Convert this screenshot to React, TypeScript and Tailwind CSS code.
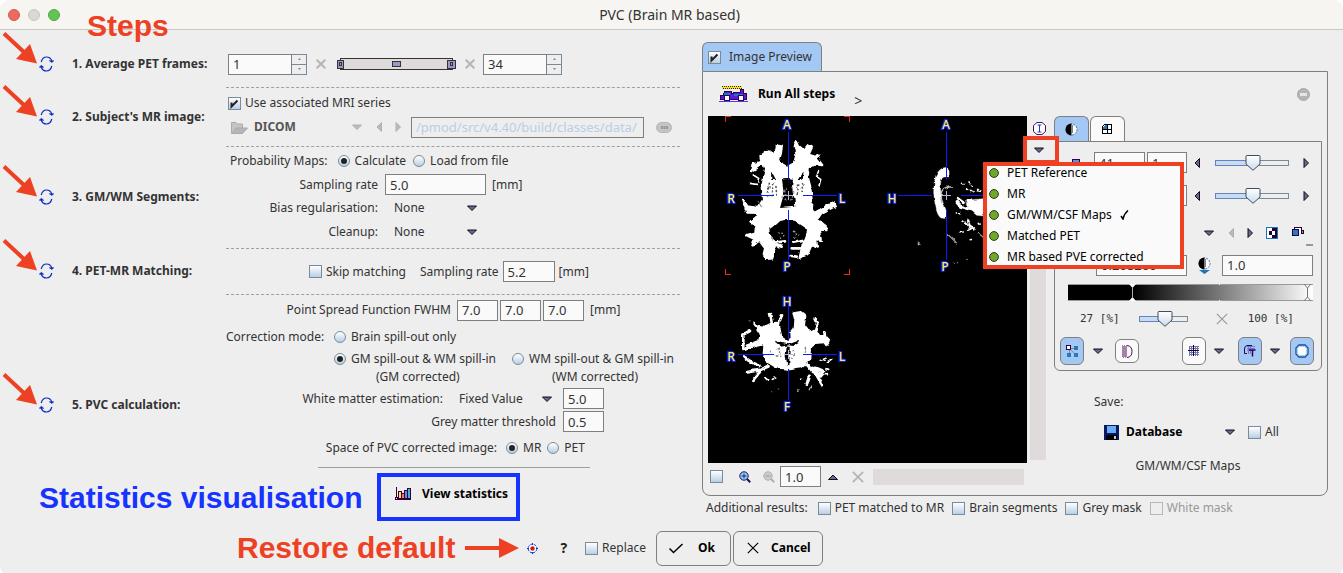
import React, { useState } from 'react';
import clsx from 'clsx';

const inputClass =
  'h-[21px] border border-[#7f7f7f] bg-[#fafafa] px-1 text-[13px] leading-4 text-[#333] outline-none';

function Triangle({ dir = 'down', muted = false }: { dir?: 'down' | 'up' | 'left' | 'right'; muted?: boolean }) {
  const shapes = {
    down: 'M0.5 1 H9.5 L5 5.5 Z',
    up: 'M0.5 5.5 H9.5 L5 1 Z',
    left: 'M5.5 0.5 V9.5 L1 5 Z',
    right: 'M1 0.5 V9.5 L5.5 5 Z',
  };
  const flat = dir === 'down' || dir === 'up';
  return (
    <svg
      width={flat ? 10 : 7}
      height={flat ? 6 : 10}
      className="shrink-0"
      fill={muted ? '#bababa' : '#666699'}
      stroke={muted ? '#b0b0b0' : '#111'}
    >
      <path d={shapes[dir]} />
    </svg>
  );
}

function Check({ label, checked = false, muted = false }: { label: string; checked?: boolean; muted?: boolean }) {
  const [on, setOn] = useState(checked);
  return (
    <label className={clsx('flex items-center gap-1 whitespace-nowrap', muted && 'text-[#999]')}>
      <span className="relative h-[13px] w-[13px] shrink-0">
        <input
          type="checkbox"
          checked={on}
          disabled={muted}
          onChange={() => setOn(!on)}
          className={clsx(
            'block h-[13px] w-[13px] appearance-none border',
            muted ? 'border-[#b8b8b8] bg-[#eee]' : 'border-[#7a8a99] bg-linear-to-b from-white to-[#b8cfe5]'
          )}
        />
        {on && (
          <svg width="13" height="13" className="pointer-events-none absolute inset-0">
            <path d="M3.5 5.5 V9.5 L9.5 3.5" fill="none" stroke="#222" strokeWidth="2" />
          </svg>
        )}
      </span>
      {label}
    </label>
  );
}

function Radio({ name, label, checked = false }: { name: string; label: string; checked?: boolean }) {
  return (
    <label className="flex items-center gap-[5px] whitespace-nowrap">
      <span className="relative h-3 w-3 shrink-0">
        <input
          type="radio"
          name={name}
          defaultChecked={checked}
          className="peer block h-3 w-3 appearance-none rounded-full border border-[#7a8a99] bg-linear-to-b from-white to-[#b8cfe5]"
        />
        <span className="pointer-events-none absolute inset-[3px] hidden rounded-full bg-[#222] peer-checked:block" />
      </span>
      {label}
    </label>
  );
}

function Select({ label, value, className, muted = false }: { label: string; value: string; className: string; muted?: boolean }) {
  return (
    <span className={clsx('flex items-center', className)}>
      <select
        aria-label={label}
        disabled={muted}
        className="min-w-0 flex-1 appearance-none bg-transparent opacity-100 outline-none"
      >
        <option>{value}</option>
      </select>
      <Triangle muted={muted} />
    </span>
  );
}

function Spinner({ label, value }: { label: string; value: string }) {
  return (
    <span className="flex">
      <input aria-label={label} defaultValue={value} className={clsx(inputClass, 'w-16')} />
      <span className="flex w-[15px] flex-col">
        <button aria-label="Increase" className="flex h-[11px] items-center justify-center border border-l-0 border-[#7a8a99]">
          <svg width="3" height="2" fill="#7a8a99"><path d="M0 2 L1.5 0 L3 2 Z" /></svg>
        </button>
        <button aria-label="Decrease" className="flex h-[10px] items-center justify-center border border-t-0 border-l-0 border-[#7a8a99]">
          <svg width="3" height="2" fill="#7a8a99"><path d="M0 0 L1.5 2 L3 0 Z" /></svg>
        </button>
      </span>
    </span>
  );
}

function Cross({ size = 10, width = 2, color = '#b5b5b5' }: { size?: number; width?: number; color?: string }) {
  return (
    <svg width={size} height={size} viewBox="0 0 10 10" className="shrink-0">
      <path d="M0.7 0.7 L9.3 9.3 M9.3 0.7 L0.7 9.3" stroke={color} strokeWidth={width} />
    </svg>
  );
}

function Slider({ label, width, thumb }: { label: string; width: number; thumb: number }) {
  return (
    <span className="relative block h-4 shrink-0" style={{ width }}>
      <svg width={width} height="16" className="block">
        <defs>
          <linearGradient id="thumb" x1="0" y1="0" x2="0" y2="1">
            <stop offset="0" stopColor="#fff" />
            <stop offset="1" stopColor="#c8dcf0" />
          </linearGradient>
        </defs>
        <rect x="0.5" y="5.5" width={width - 1} height="5" fill="#eee" stroke="#7a8a99" />
        <rect x="0.5" y="5.5" width={thumb} height="5" fill="#c8dcf0" stroke="#6382bf" />
        <path
          d={`M${thumb - 7} 1.5 q0 -1 1 -1 h12 q1 0 1 1 V9 L${thumb} 15.3 L${thumb - 7} 9 Z`}
          fill="url(#thumb)"
          stroke="#444c58"
        />
      </svg>
      <input
        type="range"
        aria-label={label}
        defaultValue={(thumb / width) * 100}
        className="absolute inset-0 w-full opacity-0"
      />
    </span>
  );
}

function RefreshIcon() {
  return (
    <svg width="15" height="16" fill="none" stroke="#0a2bc4" strokeWidth="1.2">
      <path d="M2.2 6 Q3.5 1 7.5 1 Q11.5 1 12.8 5" />
      <path d="M2.2 11 Q3.5 15 7.5 15 Q11.5 15 12.8 10" />
      <path d="M10.3 4.7 H14.7 L13 6.6 Z M0.3 11.3 H4.7 L2.3 9.2 Z" fill="#0a2bc4" strokeWidth="0.6" />
    </svg>
  );
}

function FolderIcon() {
  return (
    <svg width="17" height="13" stroke="#aaa" fill="#c4c4c4">
      <path d="M0.5 12.5 V1.5 H5 L6.5 3 H11.5 V12.5 Z" />
      <path d="M1 12.5 L5 7 H16.5 L11.5 12.5 Z" fill="#b5b5b5" />
    </svg>
  );
}

function CarIcon() {
  return (
    <svg width="30" height="17" shapeRendering="crispEdges">
      <path d="M3 1.5 H23" stroke="#ffe800" strokeWidth="3" />
      <path d="M3 0.5 H22 M4 2.5 H23" stroke="#2c1a4d" strokeDasharray="1 1" />
      <path d="M4 7 H5 V5 H12 V7 H14 V6 H21 V3 H24 V7 H27 V13 H1 V9 H4 Z" fill="#5a1ae0" stroke="#2a0845" />
      <path d="M12 4 H15 V6 H21 V4 H12" fill="#eee" />
      <path d="M5 7.5 H11 M15 9 H24" stroke="#1976c8" strokeWidth="2" />
      <circle cx="8" cy="12" r="3" fill="#fff" stroke="#2a0845" />
      <circle cx="22" cy="12" r="3" fill="#fff" stroke="#2a0845" />
      <path d="M0 15.5 H29" stroke="#5530ff" />
    </svg>
  );
}

function ChartIcon() {
  return (
    <svg width="17" height="14" shapeRendering="crispEdges" stroke="#35003f">
      <path d="M1.5 0 V12.5 H16" fill="none" />
      <rect x="0.5" y="10.5" width="2" height="2" fill="#fff" />
      <rect x="3.5" y="4.5" width="3" height="7" fill="#ffe14a" />
      <rect x="6.5" y="6.5" width="3" height="5" fill="#ff7a4a" />
      <rect x="9.5" y="3.5" width="3" height="8" fill="#5b8fe8" />
      <rect x="12.5" y="1.5" width="3" height="10" fill="#40b4cf" />
    </svg>
  );
}

function ContrastIcon() {
  return (
    <svg width="13" height="13">
      <circle cx="6.5" cy="6.5" r="5.5" fill="#fff" stroke="#2f78b8" strokeDasharray="2 1" />
      <path d="M6.5 0.5 A6 6 0 0 0 6.5 12.5 Z" fill="#000" />
      <path d="M7.5 2.5 v8" stroke="#000" strokeDasharray="1 1" />
    </svg>
  );
}

function MagnifierIcon({ sign, muted = false }: { sign: 'plus' | 'minus'; muted?: boolean }) {
  return (
    <svg width="12" height="12" stroke={muted ? '#b0b0b0' : '#2a0a50'}>
      <circle cx="5" cy="5" r="4.2" fill={muted ? '#ccc' : '#8fd0f5'} />
      <path d="M8 8 L11.2 11.2" strokeWidth="2" />
      <path d={sign === 'plus' ? 'M2.5 5 H7.5 M5 2.5 V7.5' : 'M2.5 5 H7.5'} stroke={muted ? '#999' : '#0a2a90'} />
    </svg>
  );
}

function StepArrow() {
  return (
    <svg width="36" height="34" className="pointer-events-none absolute top-1/2 left-[2px] -mt-[34px]">
      <path d="M2 2.5 L24 23" stroke="#ee4023" strokeWidth="4" />
      <path d="M35 32.5 L14 28 L28 13 Z" fill="#ee4023" />
    </svg>
  );
}

function Step({ title, last = false, children }: { title: string; last?: boolean; children: React.ReactNode }) {
  return (
    <section className="relative grid grid-cols-[39px_33px_154px_1fr] items-center">
      <StepArrow />
      <button aria-label={`Run ${title}`} className="col-start-2 pb-0.5">
        <RefreshIcon />
      </button>
      <h2 className="pb-0.5 font-bold whitespace-nowrap">{title}</h2>
      <div className={clsx('flex flex-col justify-center self-stretch', !last && 'border-b border-dashed border-[#a0a0a0]')}>
        {children}
      </div>
    </section>
  );
}

function OrientationLabel({ x, y, children }: { x: number; y: number; children: string }) {
  return (
    <text x={x} y={y} textAnchor="middle" stroke="#0a22ff" strokeWidth="2" paintOrder="stroke" fill="#fff04a">
      {children}
    </text>
  );
}

function BrainViewer() {
  return (
    <svg width="319" height="347" className="block font-['Noto_Sans',sans-serif] text-xs font-medium">
      <defs>
        <filter id="tissue" x="-10%" y="-10%" width="120%" height="120%">
          <feTurbulence type="fractalNoise" baseFrequency="0.16" numOctaves="3" seed="4" />
          <feDisplacementMap in="SourceGraphic" scale="4" xChannelSelector="R" yChannelSelector="G" />
        </filter>
      </defs>
      {/* Axial slice */}
      <g filter="url(#tissue)">
        <g transform="translate(-8 -86) scale(0.33333)" fill="#fff" stroke="#fff" strokeLinecap="round" strokeLinejoin="round">
          <path
            d="M182 378 L205 364 L218 374 L228 362 L232 345 L245 347 L242 370 L236 390 L247 404 L262 412 L280 402 L286 390 L290 372 L285 350 L289 333 L297 350 L312 362 L324 346 L335 352 L325 374 L348 382 L366 405 L346 402 L326 412 L322 440 L330 470 L334 508 L332 535 L342 550 L378 530 L400 518 L404 528 L362 551 L351 569 L378 590 L382 600 L355 598 L362 632 L348 628 L350 652 L335 642 L322 672 L300 682 L307 650 L318 625 L326 602 L314 586 L289 570 L262 565 L239 569 L214 592 L206 580 L222 556 L208 560 L204 595 L208 625 L226 640 L222 655 L213 685 L200 686 L192 672 L196 655 L176 628 L158 646 L165 627 L140 615 L166 608 L170 588 L152 574 L169 563 L174 548 L142 547 L128 510 L142 530 L174 535 L190 510 L186 475 L196 430 L200 412 L186 402 L160 418 L158 404 L185 396 Z"
            strokeWidth="8"
          />
          <g fill="none" strokeWidth="8">
            <path d="M205 390 L195 367 M160 400 L154 423 M225 390 L252 424 M303 390 L276 425 M340 390 L354 374" />
            <path d="M205 640 L255 634 M245 650 L228 645 M325 630 L280 638 M300 655 L275 655 M290 680 L272 678" />
            <path d="M330 590 L337 640 M190 560 L186 620" strokeWidth="20" />
            <path d="M355 425 L350 440 L362 448 L357 468 M150 460 L172 463 M160 435 L176 445 L178 455" strokeWidth="5" />
          </g>
          <g fill="#000" stroke="none">
            <path d="M246 448 Q262 440 279 448 L276 475 Q284 500 286 530 L266 532 L240 534 L248 505 L250 478 Z" />
            <path d="M213 425 L221 436 L228 450 L214 450 Z M311 425 L301 436 L294 450 L308 450 Z" />
          </g>
          <g fill="none" stroke="#555" strokeWidth="5">
            <path d="M208 460 L202 505 M218 462 L216 500 M228 470 L230 495 M296 465 L290 500 M308 460 L306 490" strokeDasharray="2 10" />
            <path d="M172 510 L184 530" stroke="#777" strokeWidth="3" />
          </g>
          <g fill="none" stroke="#999" strokeWidth="4">
            <path d="M250 485 L258 475 M258 510 L250 515 M276 475 L282 488 M272 510 L278 500 M252 495 H280" strokeDasharray="3 7" />
            <path d="M235 606 L248 610 M280 604 L295 618 M240 622 L255 616 M285 622 L299 618" strokeDasharray="2 9" />
          </g>
        </g>
      </g>
      {/* Sagittal slice */}
      <g filter="url(#tissue)">
        <g transform="translate(-8 -86) scale(0.33333)" fill="#fff" stroke="#fff" strokeLinecap="round" strokeLinejoin="round">
          <path d="M744 413 Q719 408 708 438 Q693 480 710 543 Q717 567 732 565 Q744 560 739 542 Q718 500 722 453 Q726 438 744 441 Z" />
          <path d="M725 515 Q716 475 745 471 L757 471" fill="none" strokeWidth="4" stroke="#bbb" />
          <path d="M768 515 L781 529 L805 536 M772 505 L790 518" fill="none" strokeWidth="9" />
          <path d="M800 510 L850 506 V558 L830 556 L806 536 Z" />
          <path d="M788 460 L793 463 M807 459 L817 468 M803 478 L822 485 M833 481 L843 487 M769 549 L781 548 M786 573 L799 579 M806 603 L821 590 M779 605 L790 606 M811 629 L818 628 M835 580 L840 585 M826 515 L850 530" strokeWidth="5" strokeDasharray="3 7" />
          <path d="M795 578 L815 590 L828 603 M805 568 L812 600" fill="none" strokeWidth="6" strokeDasharray="8 6" />
          <path d="M742 612 L771 640 M652 637 L658 643 M835 610 L850 622" strokeWidth="4" stroke="#999" />
          <path d="M762 697 H763 M775 695 H776 M800 691 H801" strokeWidth="4" stroke="#777" />
        </g>
      </g>
      {/* Coronal slice */}
      <g filter="url(#tissue)">
        <g transform="translate(-8 164) scale(0.33333)" fill="#fff" stroke="#fff" strokeLinecap="round" strokeLinejoin="round">
          <path
            d="M172 150 L178 138 L195 140 L215 130 L232 128 L240 148 L244 172 L265 187 L275 178 L274 158 L284 145 L286 120 L280 100 L302 96 L316 108 L312 134 L330 158 L348 150 L358 168 L385 174 L382 186 L348 189 L330 203 L328 239 L302 262 L270 268 L230 262 L202 245 L191 220 L193 192 L152 202 L140 196 L177 182 L182 165 Z"
            strokeWidth="6"
          />
          <g fill="none" strokeWidth="9">
            <path d="M210 102 L216 132 M246 106 L238 125 L234 150 M164 132 L182 155 M130 207 V164 L150 153 M134 206 L160 196 M344 118 L352 132 L342 160 M373 157 L379 195" strokeWidth="8" />
            <path d="M135 233 L155 247 L178 257 M205 259 L184 268 L174 283 L160 299 M177 270 L142 277 M320 253 L338 274 L358 284 L369 278 M345 264 L372 275 M328 288 L321 311 M350 285 L365 312" />
            <path d="M338 268 L360 285" strokeWidth="16" />
            <path d="M359 242 L378 235 M382 246 L395 237 M378 266 L386 268 M195 293 L203 300 M217 298 L227 294 M301 298 H304 M372 284 H382" strokeWidth="5" />
          </g>
          <path d="M225 182 L244 189 L266 193 L293 183 L296 189 L280 198 L266 196 L242 200 L229 192 Z" fill="#000" stroke="none" />
          <path d="M260 200 H269 L268 250 L262 258 L257 225 Z" fill="#000" stroke="none" />
          <path d="M235 208 L242 229 M277 213 L285 207 M283 225 L276 235 M212 214 L230 228 M316 203 V221" fill="none" stroke="#888" strokeWidth="5" strokeDasharray="2 9" />
          <path d="M217 334 H218 M296 330 H297 M326 329 L334 322" strokeWidth="5" stroke="#bbb" />
          <path d="M235 327 H236 M150 122 H151" strokeWidth="4" stroke="#555" />
        </g>
      </g>
      {/* Crosshairs */}
      <g stroke="#0a1cff" shapeRendering="crispEdges" fill="none">
        <path d="M80.5 16 V64 M80.5 94 V144 M30 79.5 H66 M95 79.5 H129" />
        <path d="M238.5 16 V64 M238.5 94 V144 M190 79.5 H224 M253 79.5 H276" />
        <path d="M80.5 191 V224 M80.5 253 V284 M30 238.5 H66 M95 238.5 H129" />
        <path d="M76 79.5 H85 M80.5 75 V84 M234 79.5 H243 M238.5 75 V84 M76 238.5 H85 M80.5 234 V243" stroke="#b9b5d8" />
        <path d="M17.5 6 V0.5 H23 M136 0.5 H141.5 V6 M17.5 153 V158.5 H23 M136 158.5 H141.5 V153" stroke="#ee2a1a" />
      </g>
      <OrientationLabel x={79} y={13}>A</OrientationLabel>
      <OrientationLabel x={79} y={155}>P</OrientationLabel>
      <OrientationLabel x={23} y={87}>R</OrientationLabel>
      <OrientationLabel x={134} y={87}>L</OrientationLabel>
      <OrientationLabel x={238} y={13}>A</OrientationLabel>
      <OrientationLabel x={237} y={155}>P</OrientationLabel>
      <OrientationLabel x={184} y={87}>H</OrientationLabel>
      <OrientationLabel x={79} y={190}>H</OrientationLabel>
      <OrientationLabel x={23} y={245}>R</OrientationLabel>
      <OrientationLabel x={134} y={245}>L</OrientationLabel>
      <OrientationLabel x={79} y={295}>F</OrientationLabel>
    </svg>
  );
}

const mapItems = ['PET Reference', 'MR', 'GM/WM/CSF Maps', 'Matched PET', 'MR based PVE corrected'];

function MapMenu() {
  const [selected, setSelected] = useState('GM/WM/CSF Maps');
  return (
    <div
      role="menu"
      className="absolute top-[90px] right-[143px] z-20 w-[201px] bg-[#fafafa] pb-0.5 text-black shadow-[inset_0_0_0_4px_#ee4023]"
    >
      {mapItems.map((item) => (
        <button
          key={item}
          role="menuitem"
          onClick={() => setSelected(item)}
          className="flex h-[21px] w-full items-center gap-2 pl-1.5 text-left whitespace-nowrap"
        >
          <svg width="10" height="10" className="shrink-0">
            <circle cx="5" cy="5" r="4.4" fill="#70a82c" stroke="#2c3a12" />
          </svg>
          {item}
          {selected === item && (
            <svg width="9" height="10" fill="none" stroke="#000" strokeWidth="1.5">
              <path d="M1 6 L3 9 Q4 4 8 0.5" />
            </svg>
          )}
        </button>
      ))}
    </div>
  );
}

function ToolButton({ label, active = false, children }: { label: string; active?: boolean; children: React.ReactNode }) {
  return (
    <button
      aria-label={label}
      className={clsx(
        'flex h-7 w-6 shrink-0 items-center justify-center rounded-md border border-[#7f7f7f]',
        active ? 'bg-[#a4c8f4]' : 'bg-[#fafafa]'
      )}
    >
      {children}
    </button>
  );
}

function SliceRow({ label, slice, size }: { label: string; slice: string; size: string }) {
  return (
    <div className="flex h-[33px] items-center pr-[7px] pl-[17px]">
      <svg width="8" height="8" className="mr-[14px]"><rect x="0.5" y="0.5" width="7" height="7" fill="#5b8fe8" stroke="#35003f" /></svg>
      <input aria-label={`${label} slice`} defaultValue={slice} className={clsx(inputClass, 'mr-0.5 w-[51px]')} />
      <input aria-label={`${label} count`} defaultValue={size} className={clsx(inputClass, 'mr-[7px] w-10')} />
      <button aria-label={`Previous ${label}`}><Triangle dir="left" /></button>
      <span className="mx-auto"><Slider label={label} width={74} thumb={38} /></span>
      <button aria-label={`Next ${label}`} className="pr-1"><Triangle dir="right" /></button>
    </div>
  );
}

function ColorPanel() {
  return (
    <div className="rounded-b-md border border-[#7f7f7f] pt-1">
      <SliceRow label="Slice" slice="41" size="1" />
      <SliceRow label="Time" slice="1" size="1" />
      <div className="flex h-[42px] items-center justify-end pr-2">
        <button aria-label="Color table"><Triangle /></button>
        <button aria-label="Previous table" className="ml-3.5"><Triangle dir="left" muted /></button>
        <button aria-label="Next table" className="ml-3"><Triangle dir="right" /></button>
        <button aria-label="Invert" className="ml-3">
          <svg width="12" height="12" shapeRendering="crispEdges">
            <rect x="0.5" y="0.5" width="11" height="11" fill="#fff" stroke="#1976b8" />
            <path d="M6 1 h5 v10 h-5 z M3 4 h3 v4 h-3 z" fill="#250035" />
            <path d="M6 4 h3 v4 h-3 z" fill="#fff" />
          </svg>
        </button>
        <button aria-label="Copy settings" className="mr-2 ml-3.5">
          <svg width="13" height="12" shapeRendering="crispEdges" stroke="#250035">
            <path d="M2.5 3 V0.5 H9.5 V7" fill="#fff" />
            <rect x="0.5" y="2.5" width="6" height="6" fill="#2a78c8" />
            <rect x="9.5" y="3.5" width="2" height="3" fill="#5ab0f0" />
          </svg>
        </button>
        <span className="mb-2 -ml-[7px] h-0.5 w-[7px] self-end bg-[#999]" />
      </div>
      <div className="flex h-[22px] items-center justify-end pr-2">
        <input aria-label="Minimum" defaultValue="0.268266" className={clsx(inputClass, 'w-[91px]')} />
        <button aria-label="Range mode" className="mx-[11px]">
          <ContrastIcon />
          <svg width="13" height="4" fill="#1976b8"><path d="M1 0 H12 L6.5 4 Z" /></svg>
        </button>
        <input aria-label="Maximum" defaultValue="1.0" className={clsx(inputClass, 'w-[91px]')} />
      </div>
      <div className="mt-2 pr-2 pl-[13px]">
        <svg width="100%" height="17" className="block">
          <defs>
            <linearGradient id="greys"><stop offset="0.27" /><stop offset="1" stopColor="#fff" /></linearGradient>
          </defs>
          <rect width="100%" height="17" fill="url(#greys)" />
          <path d="M0 0.5 H400 M0 16.5 H400" stroke="#999" />
          <path d="M61 0 H68 L64.5 4 Z M61 17 H68 L64.5 13 Z" fill="#fff" />
          <path d="M64.5 3 V14" stroke="#aaa" />
          <path d="M236 0 L239.5 4 V13 L236 17 M243 0 L239.5 4 M239.5 13 L243 17" stroke="#777" fill="none" />
          <path d="M151 0.5 H152 M151 16.5 H152" stroke="#fff" />
        </svg>
      </div>
      <div className="flex h-9 items-center justify-between pr-[27px] pl-[25px] font-['DejaVu_Sans_Mono',monospace] text-[11px] whitespace-pre">
        <span>27 [%]</span>
        <span className="pr-2"><Slider label="Lower threshold" width={49} thumb={26} /></span>
        <Cross size={12} width={1} color="#999" />
        <span>100 [%]</span>
      </div>
      <div className="flex items-center pr-[7px] pb-[5px] pl-[5px]">
        <ToolButton label="Layout" active>
          <svg width="12" height="12" shapeRendering="crispEdges" fill="#2a78b8">
            <rect x="0.5" y="0.5" width="4" height="4" fill="#fff" stroke="#35003f" />
            <path d="M8 1 h4 v4 h-4 z M1 8 h4 v4 h-4 z M8 8 h4 v4 h-4 z" />
            <path d="M5 3 h3 M3 5 v3 M5 5 l3 3" stroke="#888" />
          </svg>
        </ToolButton>
        <button aria-label="Layout options" className="mx-[9px]"><Triangle /></button>
        <button aria-label="Interpolation" className="ml-[3px] flex h-6 w-6 items-center justify-center rounded-md border border-[#7f7f7f] bg-[#fafafa]">
          <svg width="12" height="13" fill="none" stroke="#4a1050">
            <path d="M1.5 0.5 V12.5 M3.5 0.5 V12.5 M5.5 0.5 V12.5" strokeDasharray="1 1" />
            <path d="M2.5 1.5 V12.5 M4.5 1.5 V12.5" strokeDasharray="1 1" />
            <path d="M6 0.5 Q11 1 11 6.5 Q11 12 6 12.5" />
          </svg>
        </button>
        <span className="flex-1" />
        <ToolButton label="Grid">
          <svg width="12" height="12" shapeRendering="crispEdges">
            <path d="M1 1.5 h10 M1 3.5 h10 M1 7.5 h10 M1 9.5 h10 M1.5 1 v10 M3.5 1 v10 M7.5 1 v10 M9.5 1 v10" stroke="#6a78b0" />
            <path d="M0 5.5 h11 M5.5 0 v11" stroke="#250035" />
          </svg>
        </ToolButton>
        <button aria-label="Grid options" className="mx-2"><Triangle /></button>
        <span className="w-1.5" />
        <ToolButton label="Annotations" active>
          <svg width="12" height="12" fill="none" stroke="#35004f">
            <path d="M3 1.5 H11 M3 3.5 H11 M3 5.5 H8 M4.5 1 V9 M6.5 1 V9" stroke="#6a78d0" />
            <path d="M8 0.5 H3 Q0.5 1 0.5 4 V8.5 H3" />
            <path d="M5 5 H11.5 M8.5 5 V11.5" strokeWidth="1.5" />
          </svg>
        </ToolButton>
        <button aria-label="Annotation options" className="mr-2.5 ml-2"><Triangle /></button>
        <ToolButton label="Markers" active>
          <svg width="14" height="14">
            <path d="M4 1 H10 L13 4 V10 L10 13 H4 L1 10 V4 Z" fill="#fff" stroke="#164a9c" strokeWidth="1.3" />
            <path d="M4.5 2.5 H9.5 L11.5 4.5 V9.5 L9.5 11.5 H4.5 L2.5 9.5 V4.5 Z" fill="none" stroke="#90dcf8" />
          </svg>
        </ToolButton>
      </div>
    </div>
  );
}

function ViewerPane() {
  return (
    <div className="min-w-0 flex-1">
      <div className="flex">
        <div className="min-w-0 flex-1 bg-black"><BrainViewer /></div>
        <div className="flex w-[27px] flex-col pb-[3px] pl-[3px]">
          <button aria-label="Image information" className="mt-[6px] ml-[3px]">
            <svg width="13" height="13" className="block" fill="none">
              <path d="M4 0.5 H9 L12.5 3.5 V9.5 L9 12.5 H4 L0.5 9.5 V3.5 Z" fill="#fff" stroke="#4a1060" />
              <path d="M4.5 3 H8.5 M6.5 3 V10 M4.5 10 H8.5" stroke="#1a3cd0" />
            </svg>
          </button>
          <span className="relative h-6">
            <button
              aria-label="Select displayed image"
              className="absolute top-[1px] -left-[7px] z-10 flex h-7 w-9 items-center justify-center border-4 border-[#ee4023] bg-[#eee] pr-1"
            >
              <Triangle />
            </button>
          </span>
          <span className="mt-1 w-4 flex-1 bg-[#dfdbda]" />
        </div>
      </div>
      <div className="flex h-[31px] items-center pr-[30px] pb-1 pl-[2px]">
        <input
          type="checkbox"
          aria-label="Link zoom"
          className="h-[13px] w-[13px] appearance-none border border-[#7a8a99] bg-linear-to-b from-white to-[#b8cfe5]"
        />
        <button aria-label="Zoom in" className="ml-4"><MagnifierIcon sign="plus" /></button>
        <button aria-label="Zoom out" className="mr-[5px] ml-3"><MagnifierIcon sign="minus" muted /></button>
        <input aria-label="Zoom factor" defaultValue="1.0" className={clsx(inputClass, 'mr-[7px] w-[41px]')} />
        <button aria-label="Zoom presets"><Triangle dir="up" /></button>
        <button aria-label="Reset zoom" className="ml-3.5"><Cross size={12} width={1.5} /></button>
        <span className="ml-[9px] h-4 flex-1 bg-[#dfdbda]" />
      </div>
    </div>
  );
}

function Sidebar() {
  return (
    <div className="w-[268px] shrink-0">
      <div className="flex gap-px">
        <button aria-label="Colors" className="flex h-[25px] w-[35px] items-center justify-center rounded-t-md border border-b-0 border-[#7f7f7f] bg-[#a4c8f4]">
          <ContrastIcon />
        </button>
        <button aria-label="Layout" className="flex h-[25px] w-[35px] items-center justify-center rounded-t-md border border-b-0 border-[#7f7f7f] bg-[#fafafa]">
          <svg width="11" height="11" shapeRendering="crispEdges" fill="#fff" stroke="#000">
            <path d="M2.5 0.5 H9.5 V9.5 H0.5 V2.5 Z" />
            <path d="M1 3 L3 1 h2 v4 h-4 z" fill="#2a78b8" stroke="none" />
            <path d="M5.5 0 V10 M0 5.5 H10" />
          </svg>
        </button>
      </div>
      <ColorPanel />
      <div className="mt-[23px] pl-10">Save:</div>
      <div className="mt-3.5 flex items-center pl-[50px]">
        <svg width="15" height="15" shapeRendering="crispEdges">
          <rect width="15" height="15" fill="#0a1a60" />
          <rect x="3" y="1" width="9" height="7" fill="#6aaaf8" />
          <rect x="2" y="10" width="11" height="5" />
          <rect x="10" y="11" width="2" height="3" fill="#ccc" />
        </svg>
        <Select label="Save to" value="Database" className="mr-[13px] ml-[7px] w-[109px] font-bold text-black" />
        <Check label="All" />
      </div>
      <div className="mt-[18px] text-center">GM/WM/CSF Maps</div>
    </div>
  );
}

function ImagePreview() {
  return (
    <div className="flex min-w-0 flex-1 flex-col pt-3 pr-[15px]">
      <div className="flex h-[29px] w-[120px] items-center rounded-t-md border border-b-0 border-[#7f7f7f] bg-[#a4c8f4] pl-[5px] [&_label]:gap-2">
        <Check label="Image Preview" checked />
      </div>
      <div className="relative rounded-b-lg border border-[#7f7f7f] px-[5px]">
        <div className="flex h-11 items-center pr-3 pl-[11px]">
          <button className="flex items-center gap-[9px] font-bold text-black">
            <CarIcon />
            Run All steps
          </button>
          <button aria-label="More run options" className="mt-3.5 ml-[19px] text-sm">&gt;</button>
          <button aria-label="Hide controls" className="ml-auto">
            <svg width="13" height="13" className="block">
              <circle cx="6.5" cy="6.5" r="6" fill="#b5b5b5" stroke="#a5a5a5" />
              <rect x="3" y="5" width="7" height="3" fill="#e5e5e5" />
            </svg>
          </button>
        </div>
        <div className="flex pb-px">
          <ViewerPane />
          <Sidebar />
        </div>
        <MapMenu />
      </div>
      <div className="flex h-6 items-center gap-2 pl-1">
        <span className="mr-0.5">Additional results:</span>
        <Check label="PET matched to MR" />
        <Check label="Brain segments" />
        <Check label="Grey mask" />
        <Check label="White mask" muted />
      </div>
    </div>
  );
}

function App() {
  return (
    <div className="flex min-h-screen flex-col overflow-hidden rounded-[10px] bg-[#eee] font-['Noto_Sans','Liberation_Sans',sans-serif] text-xs leading-4 text-[#333]">
      <header className="relative flex h-[30px] items-center justify-center border-b border-[#c8c8c4] bg-[#f6f5f1] text-sm">
        <div className="absolute left-2 flex gap-2">
          <button aria-label="Close" className="h-3 w-3 rounded-full border border-[#d75a50] bg-[#ec6a5e]" />
          <button aria-label="Minimize" className="h-3 w-3 rounded-full border border-[#c6c5c2] bg-[#d9d8d5]" />
          <button aria-label="Zoom" className="h-3 w-3 rounded-full border border-[#52a842] bg-[#61c554]" />
        </div>
        <h1 className="pr-1">PVC (Brain MR based)</h1>
        <span className="absolute top-2 left-[87px] z-10 font-['Liberation_Sans',sans-serif] text-3xl leading-9 font-bold text-[#ee4023]">
          Steps
        </span>
      </header>

      <main className="flex">
        <div className="w-[702px] shrink-0 pt-3 pr-[22px]">
          <Step title="1. Average PET frames:">
            <div className="flex h-[45px] items-center pb-px pl-0.5">
              <Spinner label="First frame" value="1" />
              <span className="mr-[11px] ml-[9px]"><Cross /></span>
              <svg width="119" height="14" shapeRendering="crispEdges" stroke="#333" fill="#9999cc">
                <rect x="3.5" y="1.5" width="112" height="11" fill="#dfdbda" />
                <rect x="0.5" y="3.5" width="6" height="8" />
                <rect x="110.5" y="3.5" width="8" height="8" />
                <rect x="55.5" y="4.5" width="8" height="5" />
                <path d="M2.5 5.5 h2 v3 h-2 z M113.5 5.5 h2 v3 h-2 z" />
              </svg>
              <span className="mr-2 ml-[9px]"><Cross /></span>
              <Spinner label="Last frame" value="34" />
            </div>
          </Step>

          <Step title="2. Subject's MR image:">
            <div className="pt-[3px] pr-2 pb-[7px] pl-0.5">
              <div className="flex h-6 items-center"><Check label="Use associated MRI series" checked /></div>
              <div className="flex h-6 items-center pl-[3px]">
                <FolderIcon />
                <Select label="Source" value="DICOM" muted className="ml-1.5 w-[108px] font-bold text-[#555]" />
                <button aria-label="Previous file" className="ml-3.5"><Triangle dir="left" muted /></button>
                <button aria-label="Next file" className="mr-[9px] ml-3"><Triangle dir="right" muted /></button>
                <input
                  aria-label="MR file"
                  disabled
                  defaultValue="/pmod/src/v4.40/build/classes/data/"
                  className="h-[21px] w-[233px] border border-[#7f7f7f] px-1 text-[13px] text-[#b8cfe5]"
                />
                <button aria-label="Browse" className="ml-3">
                  <svg width="16" height="11" className="block">
                    <rect x="0.5" y="0.5" width="15" height="10" rx="5" fill="#c4c4c4" stroke="#b5b5b5" />
                    <path d="M5 5.5 h7" stroke="#999" strokeWidth="3" strokeDasharray="2 0.5" />
                  </svg>
                </button>
              </div>
            </div>
          </Step>

          <Step title="3. GM/WM Segments:">
            <div className="pt-0.5 pb-1">
              <div className="flex h-6 items-center pl-1">
                <span className="mr-2.5">Probability Maps:</span>
                <Radio name="maps" label="Calculate" checked />
                <span className="w-[7px]" />
                <Radio name="maps" label="Load from file" />
              </div>
              <label className="flex h-[23px] items-center">
                <span className="w-[152px] text-right">Sampling rate</span>
                <input defaultValue="5.0" className={clsx(inputClass, 'mr-1.5 ml-[7px] w-[101px]')} />
                [mm]
              </label>
              <div className="flex h-6 items-center">
                <span className="w-[152px] text-right">Bias regularisation:</span>
                <Select label="Bias regularisation" value="None" className="ml-4 w-[83px]" />
              </div>
              <div className="flex h-6 items-center">
                <span className="w-[152px] text-right">Cleanup:</span>
                <Select label="Cleanup" value="None" className="ml-4 w-[83px]" />
              </div>
            </div>
          </Step>

          <Step title="4. PET-MR Matching:">
            <div className="flex h-[45px] items-center pl-[83px]">
              <Check label="Skip matching" />
              <label className="ml-3.5 flex items-center gap-1">
                Sampling rate
                <input defaultValue="5.2" className={clsx(inputClass, 'w-[52px]')} />
                [mm]
              </label>
            </div>
          </Step>

          <Step title="5. PVC calculation:" last>
            <span className="absolute bottom-px left-[39px] z-10 font-['Liberation_Sans',sans-serif] text-3xl leading-9 font-bold whitespace-nowrap text-[#1633ff]">
              Statistics visualisation
            </span>
            <div className="flex h-[30px] items-center">
              <span className="w-[225px] text-right">Point Spread Function FWHM</span>
              <span className="mr-1.5 ml-1.5 flex gap-0.5">
                <input aria-label="FWHM x" defaultValue="7.0" className={clsx(inputClass, 'w-[41px]')} />
                <input aria-label="FWHM y" defaultValue="7.0" className={clsx(inputClass, 'w-[41px]')} />
                <input aria-label="FWHM z" defaultValue="7.0" className={clsx(inputClass, 'w-[41px]')} />
              </span>
              [mm]
            </div>
            <div className="grid grid-cols-[108px_178px_1fr] items-center gap-y-0.5 pt-1">
              <span className="whitespace-nowrap">Correction mode:</span>
              <Radio name="mode" label="Brain spill-out only" />
              <span />
              <span />
              <div className="pt-1"><Radio name="mode" label="GM spill-out & WM spill-in" checked /></div>
              <div className="pt-1"><Radio name="mode" label="WM spill-out & GM spill-in" /></div>
              <span />
              <span className="pl-[42px]">(GM corrected)</span>
              <span className="pl-10">(WM corrected)</span>
            </div>
            <div className="mt-0.5 flex h-[23px] items-center">
              <span className="w-[217px] text-right">White matter estimation:</span>
              <Select label="White matter estimation" value="Fixed Value" className="mr-[11px] ml-4 w-[93px]" />
              <input aria-label="White matter value" defaultValue="5.0" className={clsx(inputClass, 'w-[41px]')} />
            </div>
            <label className="flex h-[23px] items-center">
              <span className="mr-[7px] w-[330px] text-right">Grey matter threshold</span>
              <input defaultValue="0.5" className={clsx(inputClass, 'w-[41px]')} />
            </label>
            <div className="flex h-[30px] items-center">
              <span className="mr-[9px] w-[271px] text-right">Space of PVC corrected image:</span>
              <Radio name="space" label="MR" checked />
              <span className="w-1.5" />
              <Radio name="space" label="PET" />
            </div>
            <hr className="mt-1 ml-[92px] w-[272px] border-[#a0a0a0]" />
            <button className="mt-[5px] -mb-1 ml-[151px] flex h-12 w-[143px] items-center gap-2.5 border-4 border-[#1633ff] pb-1.5 pl-[14px] font-bold whitespace-nowrap text-black">
              <ChartIcon />
              View statistics
            </button>
          </Step>
        </div>

        <ImagePreview />
      </main>

      <footer className="flex h-14 items-center pl-[237px]">
        <span className="font-['Liberation_Sans',sans-serif] text-3xl leading-9 font-bold whitespace-nowrap text-[#ee4023]">
          Restore default
        </span>
        <svg width="54" height="20" className="mr-2 ml-2.5" fill="#ee4023">
          <path d="M0 8 H34 V0 L54 10 L34 20 V12 H0 Z" />
        </svg>
        <button aria-label="Restore default">
          <svg width="11" height="11" className="block">
            <circle cx="5.5" cy="5.5" r="4.3" fill="#fff" stroke="#1633d0" strokeDasharray="2.5 1" />
            <path d="M0 5.5 H2 M9 5.5 H11 M5.5 0 V2 M5.5 9 V11" stroke="#1633d0" />
            <circle cx="5.5" cy="5.5" r="2.2" fill="#c02020" />
          </svg>
        </button>
        <button aria-label="Help" className="mr-[18px] ml-[22px] text-sm font-bold text-[#222]">?</button>
        <Check label="Replace" />
        <button className="ml-2.5 flex h-[35px] w-[75px] items-center gap-[15px] rounded-md border border-[#7f7f7f] pl-3 font-bold text-black">
          <svg width="14" height="11" fill="none" stroke="#000" strokeWidth="1.5">
            <path d="M0.5 5.5 L4.5 9.5 L13.5 1" />
          </svg>
          Ok
        </button>
        <button className="ml-0.5 flex h-[35px] w-[90px] items-center gap-3 rounded-md border border-[#7f7f7f] pl-[13px] font-bold text-black">
          <Cross size={12} width={1} color="#000" />
          Cancel
        </button>
      </footer>
    </div>
  );
}

export default App;
